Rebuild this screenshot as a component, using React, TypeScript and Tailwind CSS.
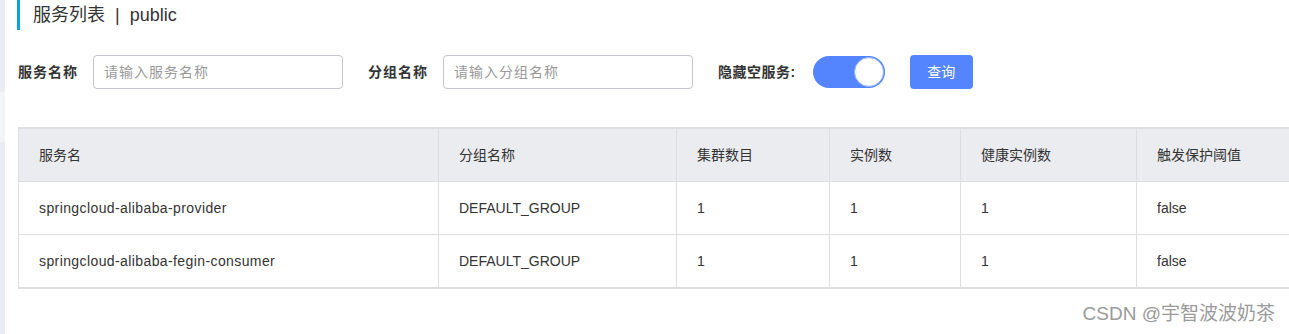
import React from "react";

const font = { fontFamily: '"Liberation Sans", "Noto Sans CJK SC", sans-serif' };

const cols = [
  { title: "服务名", w: "w-[420px]" },
  { title: "分组名称", w: "w-[238px]" },
  { title: "集群数目", w: "w-[153px]" },
  { title: "实例数", w: "w-[131px]" },
  { title: "健康实例数", w: "w-[176px]" },
  { title: "触发保护阈值", w: "w-[200px]" },
];

const rows = [
  ["springcloud-alibaba-provider", "DEFAULT_GROUP", "1", "1", "1", "false"],
  ["springcloud-alibaba-fegin-consumer", "DEFAULT_GROUP", "1", "1", "1", "false"],
];

export default function App() {
  return (
    <div className="relative flex h-[334px] w-[1289px] overflow-hidden bg-white text-[#333]" style={font}>
      <div className="flex w-[5px] shrink-0 flex-col">
        <div className="h-[92px] bg-[#e9ecf0]" />
        <div className="h-[50px] bg-[#f3f4f7]" />
        <div className="flex-1 bg-[#e9ecf0]" />
      </div>
      <div className="flex min-w-0 flex-1 flex-col pl-[12px]">
        <div className="flex h-[30px] items-center">
          <div className="h-[30px] w-[3px] bg-[#0ba2dc]" />
          <div className="ml-[13px] text-[18px] leading-none text-[#333]">服务列表 &nbsp;|&nbsp; public</div>
        </div>
        <div className="mt-[25px] flex h-[34px] items-center pl-[1px]">
          <span className="text-[14px] font-bold text-[#333] tracking-[1px]">服务名称</span>
          <div className="ml-[15px] flex h-[34px] w-[250px] items-center rounded-[4px] border border-[#c4c6cf] px-[10px] text-[14px] text-[#999] tracking-[1px]">
            请输入服务名称
          </div>
          <span className="ml-[25px] text-[14px] font-bold text-[#333] tracking-[1px]">分组名称</span>
          <div className="ml-[15px] flex h-[34px] w-[250px] items-center rounded-[4px] border border-[#c4c6cf] px-[10px] text-[14px] text-[#999] tracking-[1px]">
            请输入分组名称
          </div>
          <span className="ml-[25px] text-[14px] font-bold text-[#333] tracking-[0.5px]">隐藏空服务:</span>
          <div className="ml-[17px] flex h-[32px] w-[72px] items-center justify-end rounded-full bg-[#5584ff] pr-[1px]">
            <div className="h-[30px] w-[30px] rounded-full border border-[#8eaeff] bg-white" />
          </div>
          <div className="ml-[25px] flex h-[34px] w-[63px] items-center justify-center rounded-[4px] bg-[#5584ff] text-[14px] text-white">
            查询
          </div>
        </div>
        <div className="ml-[1px] mt-[38px] w-[1400px] border-b-2 border-l border-t-2 border-[#dcdee2]">
          <div className="flex h-[52px] bg-[#ebecf0]">
            {cols.map((c, i) => (
              <div
                key={i}
                className={`${c.w} flex shrink-0 items-center border-r border-[#dcdee2] pl-[20px] text-[14px] text-[#333]`}
              >
                {c.title}
              </div>
            ))}
          </div>
          {rows.map((r, ri) => (
            <div key={ri} className="flex h-[53px] border-t border-[#dcdee2] bg-white">
              {r.map((v, i) => (
                <div
                  key={i}
                  className={`${cols[i].w} flex shrink-0 items-center border-r border-[#dcdee2] pl-[20px] text-[14px] text-[#333] ${
                    i === 0 ? "tracking-[0.4px]" : ""
                  }`}
                >
                  {v}
                </div>
              ))}
            </div>
          ))}
        </div>
      </div>
      <div className="absolute bottom-[6px] right-[14px] text-[19px] text-[#9a9a9a]">CSDN @宇智波波奶茶</div>
    </div>
  );
}
